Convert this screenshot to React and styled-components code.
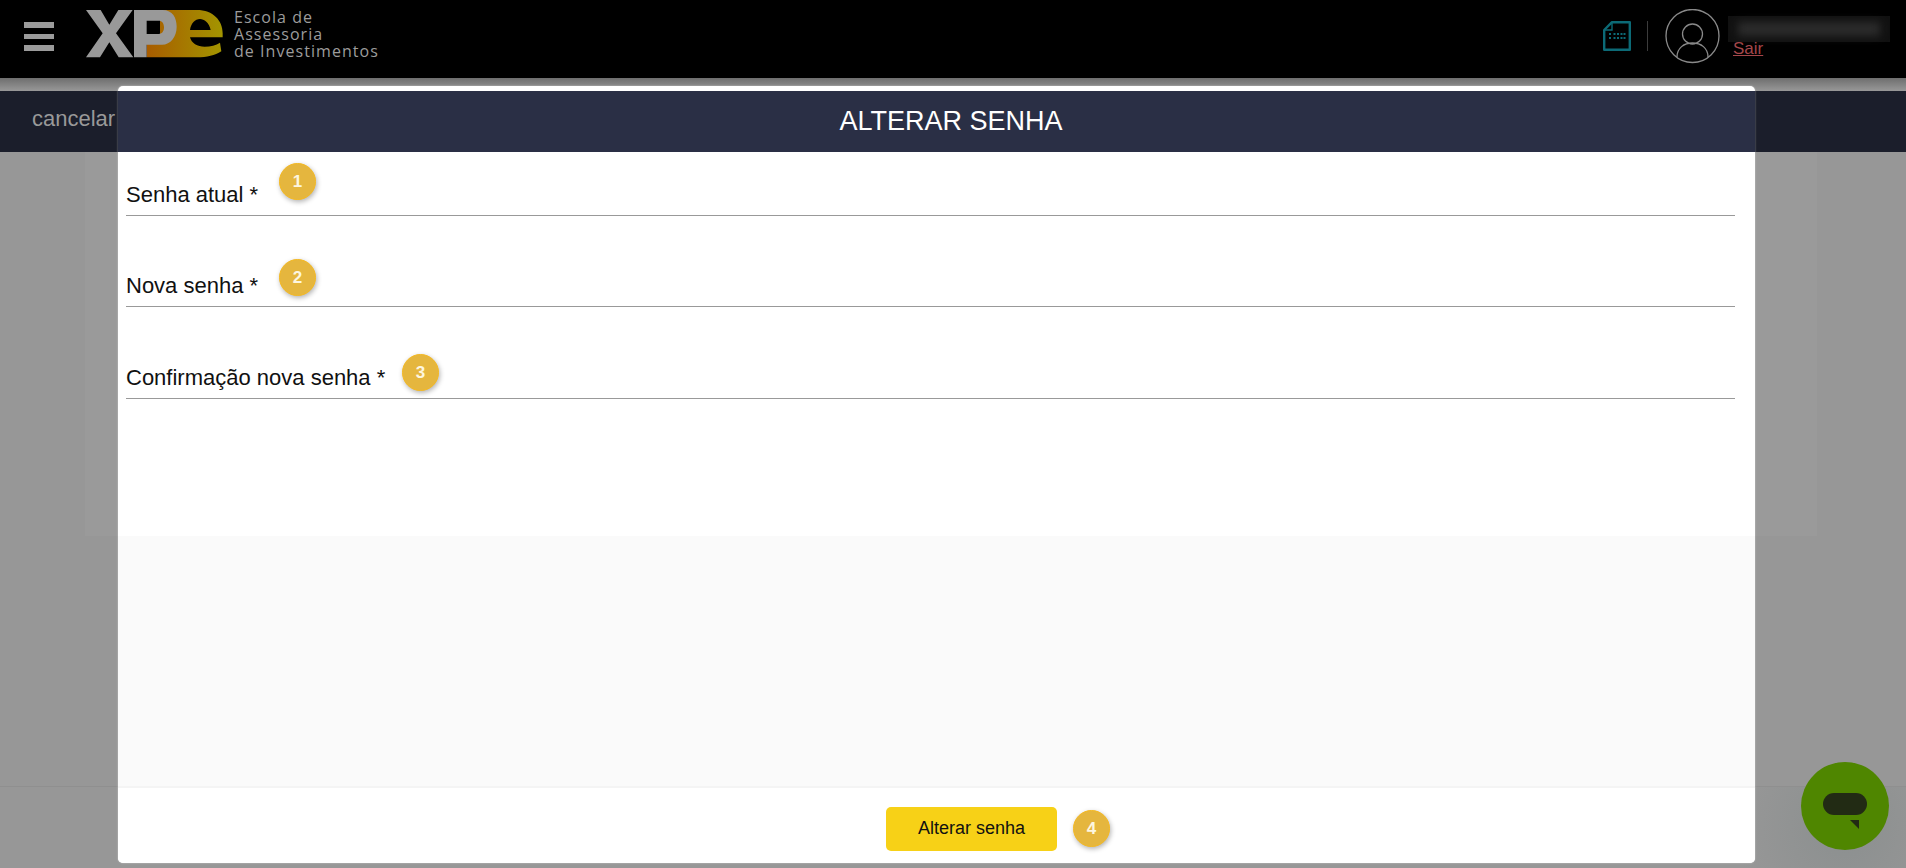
import React from 'react';
import styled, { createGlobalStyle } from 'styled-components';

const GlobalStyle = createGlobalStyle`
  html, body {
    margin: 0;
    padding: 0;
    height: 100%;
    overflow: hidden;
    background: #979797;
    font-family: "Liberation Sans", Arial, sans-serif;
  }
`;

const Page = styled.div`
  position: relative;
  width: 1906px;
  height: 868px;
  overflow: hidden;
`;

const TopBar = styled.header`
  display: flex;
  height: 78px;
  background: #000;
  padding-right: 16px;
  box-sizing: border-box;
`;

const Burger = styled.div`
  display: flex;
  flex-direction: column;
  gap: 6px;
  width: 30px;
  margin: 22px 26px 0 24px;

  span {
    display: block;
    height: 5.5px;
    background: #9b9b9b;
  }
`;

const LogoMark = styled.svg`
  width: 150px;
  height: 60px;
  margin-top: 4px;
`;

const Tagline = styled.div`
  margin: 9px 0 0 4px;
  font-family: "Open Sans", "Noto Sans", sans-serif;
  font-size: 16px;
  line-height: 17px;
  letter-spacing: 1.05px;
  color: #9c9c9c;
`;

const UserArea = styled.div`
  display: flex;
  margin-left: auto;
`;

const FileIcon = styled.svg`
  width: 28px;
  height: 30px;
  margin-top: 21px;
`;

const Divider = styled.div`
  width: 1px;
  height: 30px;
  margin: 21px 17px 0 16px;
  background: #3c3c3c;
`;

const Avatar = styled.svg`
  width: 56px;
  height: 56px;
  margin-top: 9px;
`;

const UserInfo = styled.div`
  width: 162px;
  margin-left: 7px;
  padding-top: 16px;
`;

const BlurredName = styled.div`
  position: relative;
  height: 26px;
  background: #111;

  &::before {
    content: "";
    position: absolute;
    inset: 6px 10px;
    background: #2c2c2c;
    filter: blur(4px);
  }
`;

const SignOut = styled.a`
  display: block;
  margin: -2px 0 0 5px;
  font-size: 17px;
  line-height: 17px;
  color: #a5474b;
  text-decoration: underline;
`;

const ShadeStrip = styled.div`
  height: 13px;
  background: linear-gradient(#6e6e6e, #989898);
`;

const ActionBand = styled.div`
  display: flex;
  align-items: center;
  height: 61px;
  padding: 0 0 6px 32px;
  box-sizing: border-box;
  background: #1b1e2b;
`;

const CancelLink = styled.span`
  font-size: 22px;
  color: #999;
`;

const BackPanel = styled.div`
  height: 384px;
  margin: 0 89px 0 85px;
  background: #9a9a9a;
`;

const BackFooter = styled.div`
  height: 82px;
  margin-top: 250px;
  border-top: 1px solid #8f8f8f;
  box-sizing: border-box;
  background: radial-gradient(circle at 1845px 40px, #8b8f8f 0, #979797 110px);
`;

const Modal = styled.section`
  position: absolute;
  top: 86px;
  left: 118px;
  display: flex;
  flex-direction: column;
  width: 1637px;
  height: 777px;
  padding-top: 5px;
  box-sizing: border-box;
  border-radius: 5px;
  background: #fff;
  overflow: hidden;
  box-shadow: 0 0 2px rgba(255, 255, 255, 0.5);
`;

const ModalHeader = styled.h2`
  margin: 0;
  height: 61px;
  padding-left: 29px;
  text-align: center;
  font-size: 27px;
  font-weight: 400;
  line-height: 61px;
  color: #fff;
  background: #2a2f45;
`;

const FormArea = styled.form`
  height: 384px;
  padding: 0 20px 0 8px;
  box-sizing: border-box;
  background: #fff;
`;

const Field = styled.div`
  position: relative;
  height: ${(p) => p.$height}px;
  border-bottom: 1px solid #999;
  box-sizing: border-box;
  display: flex;
  align-items: flex-end;
  padding-bottom: 8px;
`;

const FieldLabel = styled.label`
  font-size: 22px;
  line-height: 24px;
  color: #111;
`;

const Step = styled.span`
  display: flex;
  flex: none;
  align-items: center;
  justify-content: center;
  width: 37px;
  height: 37px;
  box-sizing: border-box;
  border: 1px solid #f5b921;
  border-radius: 50%;
  font-size: 17px;
  font-weight: 700;
  color: #fdf6e0;
  background: #e5b63e;
  box-shadow: 1px 2px 5px rgba(0, 0, 0, 0.3);
`;

const FieldStep = styled(Step)`
  position: absolute;
  left: ${(p) => p.$left}px;
  top: ${(p) => p.$top}px;
`;

const EmptyArea = styled.div`
  flex: 1;
  background: #fafafa;
`;

const ModalFooter = styled.footer`
  display: flex;
  align-items: center;
  justify-content: center;
  height: 77px;
  padding: 6px 0 0 123px;
  box-sizing: border-box;
  border-top: 2px solid #f4f4f4;
  background: #fff;
`;

const SubmitButton = styled.button`
  width: 171px;
  height: 44px;
  margin-right: 16px;
  border: 0;
  border-radius: 5px;
  font-family: inherit;
  font-size: 18px;
  color: #111;
  background: #f7d117;
`;

const ChatButton = styled.div`
  position: absolute;
  left: 1801px;
  top: 762px;
  width: 88px;
  height: 88px;
  border-radius: 50%;
  background: #4f8600;

  svg {
    display: block;
    width: 88px;
    height: 88px;
  }
`;

const fields = [
  { label: 'Senha atual *', height: 64, step: 1, left: 153, top: 11 },
  { label: 'Nova senha *', height: 91, step: 2, left: 153, top: 43 },
  { label: 'Confirmação nova senha *', height: 92, step: 3, left: 276, top: 47 },
];

const App = () => {
  return (
    <Page>
      <GlobalStyle />
      <TopBar>
        <Burger>
          <span />
          <span />
          <span />
        </Burger>
        <LogoMark viewBox="0 0 450 180">
          <defs>
            <linearGradient id="xpeGold" x1="200" x2="428" y1="0" y2="0" gradientUnits="userSpaceOnUse">
              <stop offset="0" stopColor="#a85c00" />
              <stop offset="1" stopColor="#a39500" />
            </linearGradient>
          </defs>
          <path
            fill="url(#xpeGold)"
            d="M240 18H350C400 18 428 50 428 88V100H330C334 118 352 128 374 128C392 128 408 124 420 116L424 142C404 155 382 160 350 160H200V110H240ZM330 78H392C388 56 372 45 360 45C345 45 333 58 330 78Z"
          />
          <path
            fill="#999"
            d="M18 18H62L88 62L115 18H158L108 88L160 160H116L88 115L60 160H18L68 88ZM162 18H248C278 18 290 42 290 68C290 98 272 122 246 122H200V160H162ZM200 50V90H236C248 90 252 80 252 70C252 58 246 50 236 50Z"
          />
        </LogoMark>
        <Tagline>
          Escola de
          <br />
          Assessoria
          <br />
          de Investimentos
        </Tagline>
        <UserArea>
          <FileIcon viewBox="0 0 28 30">
            <path d="M9 1.2H26.8V28.8H1.2V9Z" fill="none" stroke="#0c6a76" strokeWidth="2.4" strokeLinejoin="round" />
            <path d="M9 1.2V9H1.2" fill="none" stroke="#0c6a76" strokeWidth="1.4" />
            <path
              d="M6 12H8V14H6ZM6 16H8V18H6ZM10.5 12H12.5V14H10.5ZM10.5 16H12.5V18H10.5ZM14 12H16V14H14ZM14 16H16V18H14ZM17.5 12H19.5V14H17.5ZM17.5 16H19.5V18H17.5ZM20.5 12H22.5V14H20.5ZM20.5 16H22.5V18H20.5Z"
              fill="#0c6a76"
            />
          </FileIcon>
          <Divider />
          <Avatar viewBox="0 0 56 56" fill="none" stroke="#8a8a8a" strokeWidth="1.3">
            <circle cx="27.5" cy="27" r="26.5" />
            <circle cx="27.5" cy="25" r="10" />
            <path d="M12 48C12 39 19 34 27.5 34C36 34 43 39 43 48" />
          </Avatar>
          <UserInfo>
            <BlurredName />
            <SignOut>Sair</SignOut>
          </UserInfo>
        </UserArea>
      </TopBar>
      <ShadeStrip />
      <ActionBand>
        <CancelLink>cancelar</CancelLink>
      </ActionBand>
      <BackPanel />
      <BackFooter />
      <Modal>
        <ModalHeader>ALTERAR SENHA</ModalHeader>
        <FormArea>
          {fields.map((f) => (
            <Field key={f.step} $height={f.height}>
              <FieldLabel>{f.label}</FieldLabel>
              <FieldStep $left={f.left} $top={f.top}>{f.step}</FieldStep>
            </Field>
          ))}
        </FormArea>
        <EmptyArea />
        <ModalFooter>
          <SubmitButton type="button">Alterar senha</SubmitButton>
          <Step>4</Step>
        </ModalFooter>
      </Modal>
      <ChatButton>
        <svg viewBox="0 0 88 88">
          <rect x="22" y="31" width="44" height="22" rx="11" fill="#222b14" />
          <path d="M49 58H58V67Z" fill="#222b14" />
        </svg>
      </ChatButton>
    </Page>
  );
};

export default App;
